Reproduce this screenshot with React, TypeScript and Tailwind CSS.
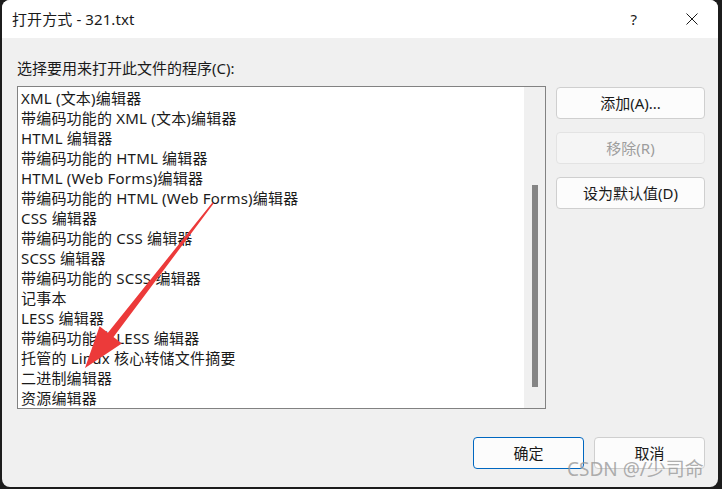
import React from 'react';

const programs = [
    'XML (文本)编辑器',
    '带编码功能的 XML (文本)编辑器',
    'HTML 编辑器',
    '带编码功能的 HTML 编辑器',
    'HTML (Web Forms)编辑器',
    '带编码功能的 HTML (Web Forms)编辑器',
    'CSS 编辑器',
    '带编码功能的 CSS 编辑器',
    'SCSS 编辑器',
    '带编码功能的 SCSS 编辑器',
    '记事本',
    'LESS 编辑器',
    '带编码功能的 LESS 编辑器',
    '托管的 Linux 核心转储文件摘要',
    '二进制编辑器',
    '资源编辑器',
];

const font = { fontFamily: '"Noto Sans", "Noto Sans CJK SC", sans-serif' };

const SideButton: React.FC<{ label: string; disabled?: boolean }> = ({ label, disabled }) => (
    <button
        className={
            disabled
                ? 'h-[32px] w-[149px] rounded-[4px] border border-[#e3e3e3] bg-[#f5f5f5] text-[15px] text-[#9d9d9d]'
                : 'h-[32px] w-[149px] rounded-[4px] border border-[#cfcfcf] bg-[#fcfcfc] text-[15px] text-[#1a1a1a]'
        }
    >
        {label}
    </button>
);

export default function App() {
    return (
        <div className="w-[722px] h-[489px] bg-[#1c1c1c] overflow-hidden" style={font}>
            <div className="relative ml-[2px] w-[716px] h-[487px] rounded-[8px] overflow-hidden flex flex-col bg-[#f0f0f0]">
                {/* Title bar */}
                <div className="h-[38px] bg-white flex items-center pl-[10px] shrink-0">
                    <span className="text-[15px] text-[#1a1a1a] tracking-[0.1px]">打开方式 - 321.txt</span>
                    <span className="ml-auto mr-[49px] text-[15px] text-[#1a1a1a]">?</span>
                    <svg width="12" height="12" viewBox="0 0 12 12" className="mr-[20px]">
                        <path d="M0.5 0.5 L11.5 11.5 M11.5 0.5 L0.5 11.5" stroke="#1a1a1a" strokeWidth="1" />
                    </svg>
                </div>

                {/* Body */}
                <div className="flex-1 pl-[15px] pt-[20px] pr-[13px] flex flex-col">
                    <div className="text-[15px] leading-[20px] text-[#1a1a1a]">选择要用来打开此文件的程序(C):</div>
                    <div className="mt-[8px] flex gap-[10px]">
                        <div className="w-[529px] h-[323px] border border-[#828282] bg-white flex">
                            <div className="flex-1 pt-[1px] pl-[3px]">
                                {programs.map((p) => (
                                    <div key={p} className="h-[20px] leading-[20px] text-[15px] text-[#1a1a1a] whitespace-nowrap tracking-[0.2px]">
                                        {p}
                                    </div>
                                ))}
                            </div>
                            <div className="w-[21px] bg-[#f0f0f0] flex justify-center pt-[98px]">
                                <div className="w-[6px] h-[202px] bg-[#858585]" />
                            </div>
                        </div>
                        <div className="flex flex-col gap-[13px] pt-[1px]">
                            <SideButton label="添加(A)..." />
                            <SideButton label="移除(R)" disabled />
                            <SideButton label="设为默认值(D)" />
                        </div>
                    </div>
                    <div className="mt-[28px] flex justify-end gap-[10px]">
                        <button className="h-[32px] w-[111px] rounded-[4px] border border-[#0067c0] bg-[#fcfcfc] text-[15px] text-[#1a1a1a]">
                            确定
                        </button>
                        <button className="h-[32px] w-[111px] rounded-[4px] border border-[#cfcfcf] bg-[#fcfcfc] text-[15px] text-[#1a1a1a]">
                            取消
                        </button>
                    </div>
                </div>

                {/* Red annotation arrow */}
                <svg className="absolute left-0 top-0 pointer-events-none" width="716" height="487" viewBox="2 0 716 487">
                    <polygon
                        points="213.6,203.5 113.5,337 121.8,343.4 85,368 99.6,326.2 107.9,332.7 212.4,202.5"
                        fill="#ec3a3a"
                    />
                </svg>

                {/* Watermark */}
                <div className="absolute left-[565px] top-[457px] text-[19px] leading-[24px] text-[#9a9a9a]/80 whitespace-nowrap">
                    CSDN @/少司命
                </div>
            </div>
        </div>
    );
}
